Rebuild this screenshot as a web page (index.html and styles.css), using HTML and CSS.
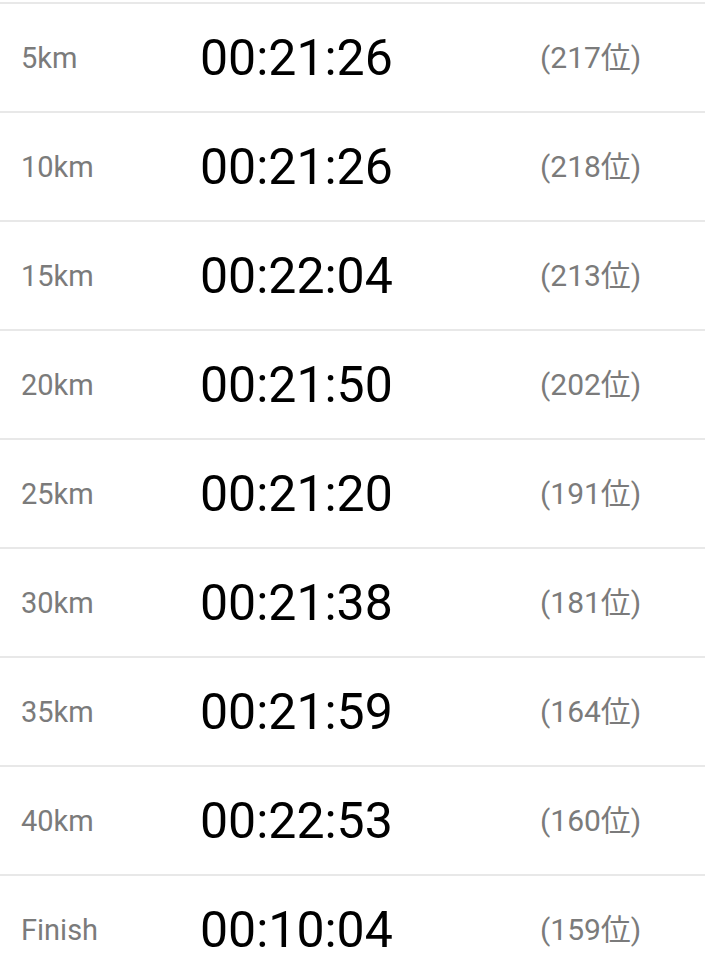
FILE: index.html
```html
<!DOCTYPE html>
<html lang="ja">
<head>
    <meta charset="UTF-8">
    <meta name="viewport" content="width=device-width, initial-scale=1.0">
    <title>Split Times</title>
    <link rel="stylesheet" href="styles.css">
</head>
<body>
    <div class="splits">
        <div class="row"><span class="label">5km</span><span class="time">00:21:26</span><span class="rank">(217位)</span></div>
        <div class="row"><span class="label">10km</span><span class="time">00:21:26</span><span class="rank">(218位)</span></div>
        <div class="row"><span class="label">15km</span><span class="time">00:22:04</span><span class="rank">(213位)</span></div>
        <div class="row"><span class="label">20km</span><span class="time">00:21:50</span><span class="rank">(202位)</span></div>
        <div class="row"><span class="label">25km</span><span class="time">00:21:20</span><span class="rank">(191位)</span></div>
        <div class="row"><span class="label">30km</span><span class="time">00:21:38</span><span class="rank">(181位)</span></div>
        <div class="row"><span class="label">35km</span><span class="time">00:21:59</span><span class="rank">(164位)</span></div>
        <div class="row"><span class="label">40km</span><span class="time">00:22:53</span><span class="rank">(160位)</span></div>
        <div class="row"><span class="label">Finish</span><span class="time">00:10:04</span><span class="rank">(159位)</span></div>
    </div>
</body>
</html>
```

FILE: styles.css
```css
body {
    margin: 0;
    background: #fff;
    font-family: Roboto, "Noto Sans CJK JP", sans-serif;
}
.splits {
    padding-top: 2px;
}
.row {
    display: grid;
    grid-template-columns: 179px 340px auto;
    align-items: center;
    height: 107px;
    padding-left: 21px;
    border-top: 2px solid #e8e8e8;
}
.label {
    font-size: 29px;
    color: #7b7b7b;
}
.time {
    font-size: 50px;
    color: #000;
}
.rank {
    font-size: 30px;
    color: #7b7b7b;
    margin-bottom: 6px;
}
```
